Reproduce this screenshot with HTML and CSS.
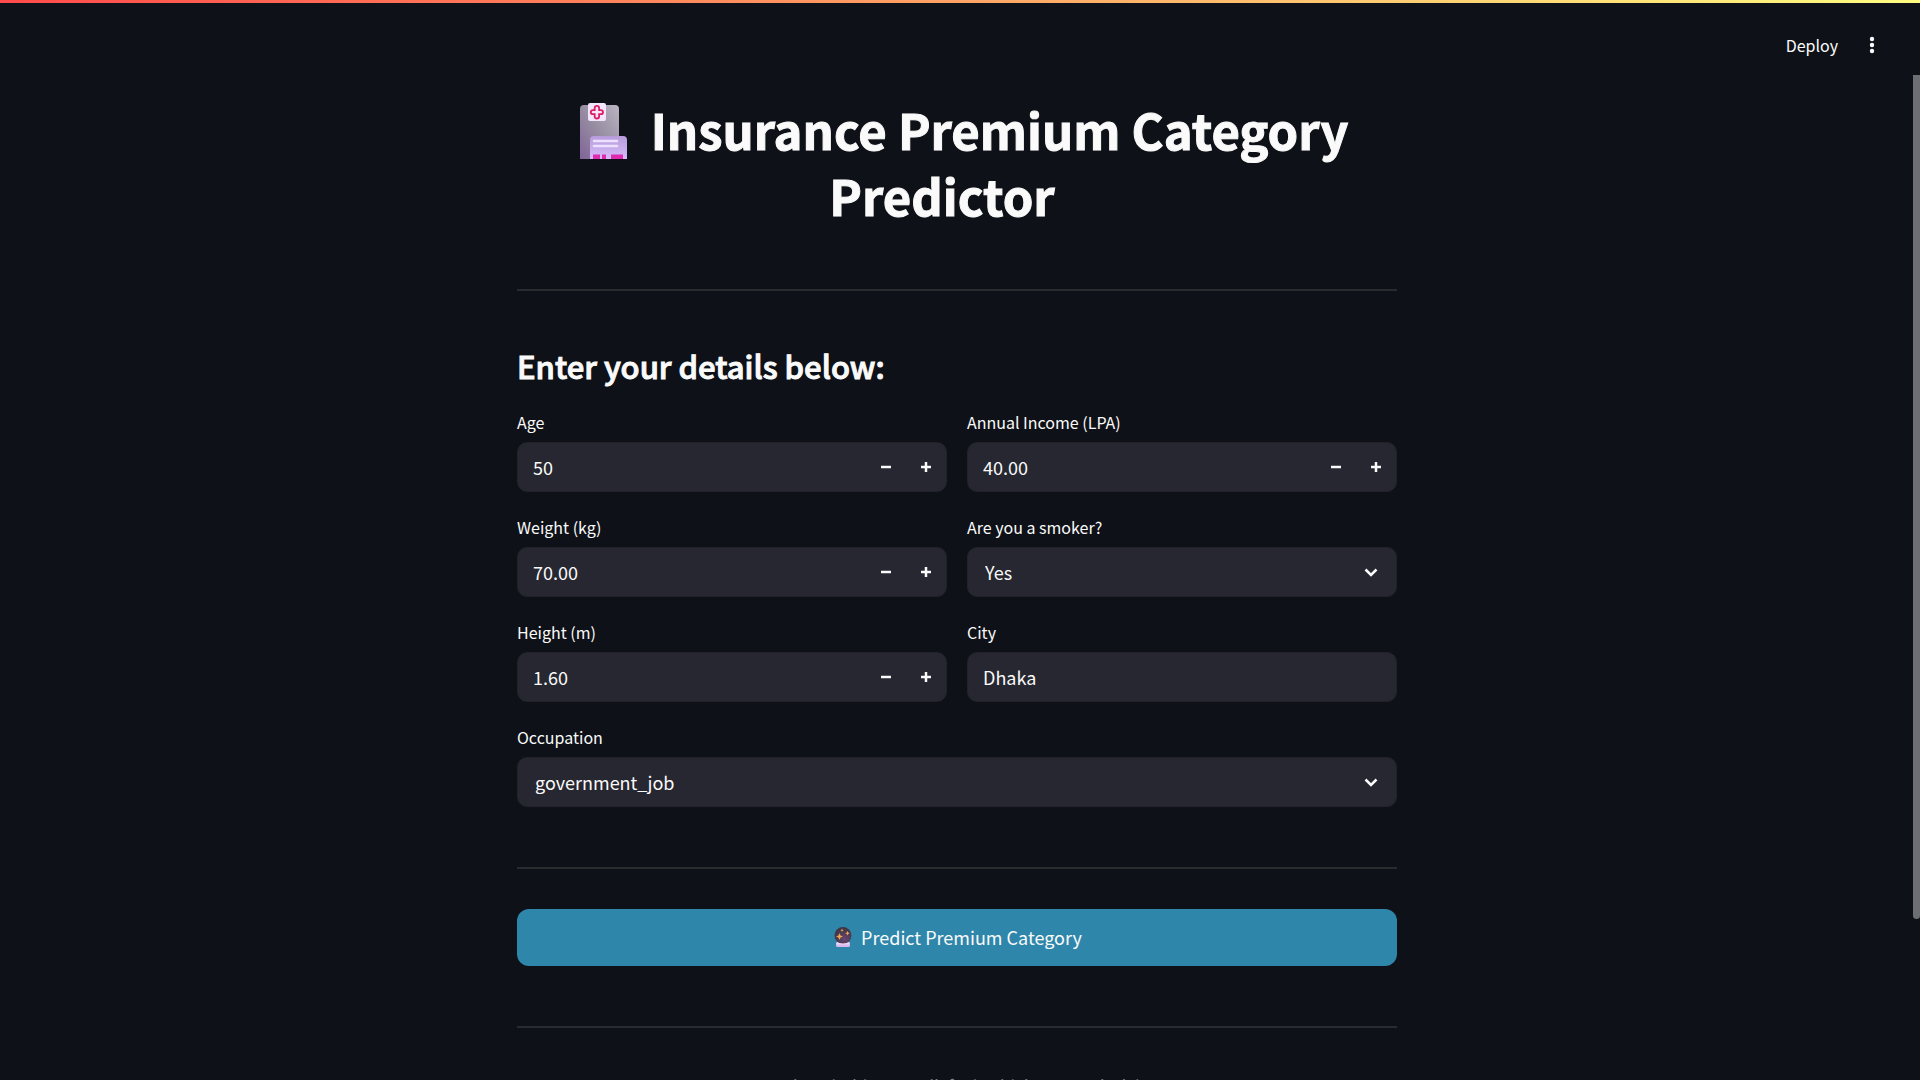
FILE: index.html
```html
<!DOCTYPE html>
<html lang="en">
<head>
<meta charset="utf-8">
<meta name="viewport" content="width=device-width, initial-scale=1">
<title>Insurance Premium Category Predictor</title>
<link rel="stylesheet" href="styles.css">
</head>
<body>
<div class="app">
  <div class="decoration"></div>
  <header class="toolbar">
    <button type="button" class="deploy">Deploy</button>
    <button type="button" class="menu" aria-label="Main menu">
      <svg viewBox="0 0 20 20" width="20" height="20" fill="currentColor"><circle cx="10" cy="4" r="2.200"/><circle cx="10" cy="10" r="2.200"/><circle cx="10" cy="16" r="2.200"/></svg>
    </button>
  </header>
  <main class="content">
    <h1 class="title"><svg class="hospital" viewBox="0 0 50 56" aria-hidden="true">
        <defs>
          <linearGradient id="tower" x1="0" y1="1" x2="1" y2="0"><stop offset="0" stop-color="#806398"/><stop offset=".5" stop-color="#978ea2"/><stop offset="1" stop-color="#bbb5c3"/></linearGradient>
          <linearGradient id="annex" x1="0" y1="0" x2="0" y2="1"><stop offset="0" stop-color="#b69cdb"/><stop offset="1" stop-color="#d5bbfa"/></linearGradient>
        </defs>
        <path d="M0 56V6q0-4 4-4h31q4 0 4 4v50z" fill="url(#tower)"/>
        <rect x="8" y="0" width="18" height="18" rx="2" fill="#f3e5fb"/>
        <path d="M14.700 7.200V5q0-2.200 2.200-2.200T19.100 5v2.200h1.700q2.200 0 2.200 2t-2.200 2h-1.700v2.300q0 2-2.200 2t-2.200-2v-2.300H13q-2.200 0-2.200-2t2.200-2z" fill="none" stroke="#df1c62" stroke-width="1.800"/>
        <path d="M10 56V37q0-4 4-4h29q4 0 4 4v19z" fill="url(#annex)"/>
        <path d="M14 38h23M14 43h23" stroke="#ede0ff" stroke-width="2.600" stroke-linecap="round"/>
        <path d="M13 56v-4.500h7V56zM22 56v-4.500h4V56zM31 56v-4.500h12V56z" fill="#df2bb0"/>
      </svg> Insurance Premium Category Predictor</h1>
    <hr class="rule">
    <h2 class="subtitle">Enter your details below:</h2>
    <form class="form">
      <div class="field">
        <label for="age">Age</label>
        <div class="control">
          <input id="age" type="text" inputmode="numeric" value="50">
          <button type="button" class="step" aria-label="Decrease age"><svg viewBox="0 0 10 10"><path d="M0 5h10"/></svg></button>
          <button type="button" class="step" aria-label="Increase age"><svg viewBox="0 0 10 10"><path d="M0 5h10M5 0v10"/></svg></button>
        </div>
      </div>
      <div class="field">
        <label for="income">Annual Income (LPA)</label>
        <div class="control">
          <input id="income" type="text" inputmode="decimal" value="40.00">
          <button type="button" class="step" aria-label="Decrease income"><svg viewBox="0 0 10 10"><path d="M0 5h10"/></svg></button>
          <button type="button" class="step" aria-label="Increase income"><svg viewBox="0 0 10 10"><path d="M0 5h10M5 0v10"/></svg></button>
        </div>
      </div>
      <div class="field">
        <label for="weight">Weight (kg)</label>
        <div class="control">
          <input id="weight" type="text" inputmode="decimal" value="70.00">
          <button type="button" class="step" aria-label="Decrease weight"><svg viewBox="0 0 10 10"><path d="M0 5h10"/></svg></button>
          <button type="button" class="step" aria-label="Increase weight"><svg viewBox="0 0 10 10"><path d="M0 5h10M5 0v10"/></svg></button>
        </div>
      </div>
      <div class="field">
        <label for="smoker">Are you a smoker?</label>
        <div class="control">
          <select id="smoker"><option>Yes</option><option>No</option></select>
          <svg class="chevron" viewBox="0 0 14 9" aria-hidden="true"><path d="M1.500 1.500L7 7l5.500-5.500"/></svg>
        </div>
      </div>
      <div class="field">
        <label for="height">Height (m)</label>
        <div class="control">
          <input id="height" type="text" inputmode="decimal" value="1.60">
          <button type="button" class="step" aria-label="Decrease height"><svg viewBox="0 0 10 10"><path d="M0 5h10"/></svg></button>
          <button type="button" class="step" aria-label="Increase height"><svg viewBox="0 0 10 10"><path d="M0 5h10M5 0v10"/></svg></button>
        </div>
      </div>
      <div class="field">
        <label for="city">City</label>
        <div class="control"><input id="city" type="text" value="Dhaka"></div>
      </div>
      <div class="field wide">
        <label for="occupation">Occupation</label>
        <div class="control">
          <select id="occupation"><option>government_job</option></select>
          <svg class="chevron" viewBox="0 0 14 9" aria-hidden="true"><path d="M1.500 1.500L7 7l5.500-5.500"/></svg>
        </div>
      </div>
    </form>
    <hr class="rule">
    <button type="button" class="predict">
      <svg class="crystal" viewBox="0 0 18 20" aria-hidden="true">
        <defs><radialGradient id="ball" cx=".6" cy=".7" r=".7"><stop offset="0" stop-color="#65456f"/><stop offset="1" stop-color="#3c3542"/></radialGradient></defs>
        <path d="M3 14.500h12l1 4q0 1.500-1.500 1.500h-11Q2 20 2 18.500z" fill="#d9b9ee"/>
        <circle cx="9" cy="8.500" r="8.500" fill="url(#ball)"/>
        <path d="M2.500 15.500q6.500 2 13 0l.5 2H2z" fill="#eddcf7"/>
        <path d="M5.500 6l1 2.500L9 9.500l-2.500 1-1 2.500-1-2.500-2.500-1 2.500-1zM13.500 4l.7 1.500 1.500.7-1.500.7-.7 1.500-.7-1.500-1.500-.7 1.500-.7zM8 1.500l.5 1.200 1.200.5-1.200.5L8 5l-.5-1.300-1.200-.5 1.200-.5z" fill="#f3a64e"/>
      </svg>
      <span>Predict Premium Category</span>
    </button>
    <hr class="rule">
    <p class="footer">Developed with Streamlit for health insurance insights</p>
  </main>
  <div class="scrollbar" aria-hidden="true"></div>
</div>
</body>
</html>
```
FILE: styles.css
```css
*, *::before, *::after { box-sizing: border-box; }

body {
  margin: 0;
  background: #0e1117;
  color: #fafafa;
  font-family: "Noto Sans CJK JP", "Noto Sans", sans-serif;
  font-size: 18px;
}

button, input, select { font: inherit; color: inherit; }

.app {
  position: relative;
  display: flex;
  flex-direction: column;
  height: 100vh;
  overflow: hidden;
}

.decoration {
  flex: none;
  height: 3px;
  background: linear-gradient(to right, #ff4b4b, #fffd80);
}

.toolbar {
  flex: none;
  display: flex;
  justify-content: flex-end;
  align-items: center;
  gap: 24px;
  height: 84px;
  padding: 0 38px 0 0;
}

.deploy, .menu, .step {
  display: flex;
  align-items: center;
  justify-content: center;
  padding: 0;
  border: 0;
  background: none;
}

.deploy { font-size: 16px; }

.content {
  flex: none;
  display: flex;
  flex-direction: column;
  width: 100%;
  max-width: 886px;
  margin: 0 auto;
  padding-right: 6px;
}

.title {
  margin: 0;
  padding: 9px 30px 1px 0;
  font-size: 49px;
  font-weight: 700;
  line-height: 66px;
  text-align: center;
  -webkit-text-stroke: 1px currentColor;
}

.hospital {
  width: 50px;
  height: 56px;
  margin: 0 10px 0 44px;
  vertical-align: -9px;
}

.rule {
  width: 100%;
  height: 2px;
  margin: 60px 0 40px;
  border: 0;
  background: #292b2e;
}

.subtitle {
  margin: 0;
  padding: 14px 0 20px;
  font-size: 31px;
  font-weight: 500;
  line-height: 42px;
  -webkit-text-stroke: 1px currentColor;
}

.form {
  display: grid;
  grid-template-columns: 1fr 1fr;
  gap: 20px;
}

.wide { grid-column: 1 / -1; }

.field label {
  display: block;
  height: 35px;
  font-size: 16px;
  line-height: 30px;
}

.control {
  position: relative;
  display: flex;
  align-items: center;
  height: 50px;
  overflow: hidden;
  border: 1px solid #21222a;
  border-radius: 10px;
  background: #262730;
}

.control input, .control select {
  flex: 1;
  min-width: 0;
  height: 48px;
  padding: 0 15px;
  border: 0;
  outline: 0;
  background: none;
}

.control select {
  padding: 0 17px;
  appearance: none;
}

.step {
  width: 40px;
  height: 48px;
}

.step svg {
  width: 10px;
  height: 10px;
  stroke: currentColor;
  stroke-width: 2.5;
}

.chevron {
  position: absolute;
  right: 18px;
  width: 14px;
  height: 9px;
  fill: none;
  stroke: currentColor;
  stroke-width: 2.5;
  pointer-events: none;
}

.predict {
  display: flex;
  align-items: center;
  justify-content: center;
  gap: 9px;
  height: 57px;
  padding: 0 0 2px 2px;
  border: 0;
  border-radius: 12px;
  background: #2e86ab;
}

.crystal {
  width: 18px;
  height: 20px;
}

.footer {
  margin: 0;
  color: #808080;
  font-size: 16px;
  line-height: 34px;
  text-align: center;
}

.scrollbar {
  position: absolute;
  top: 75px;
  right: 0;
  width: 7px;
  height: 844px;
  border-radius: 0 0 4px 4px;
  background: #6d6e72;
}
```
